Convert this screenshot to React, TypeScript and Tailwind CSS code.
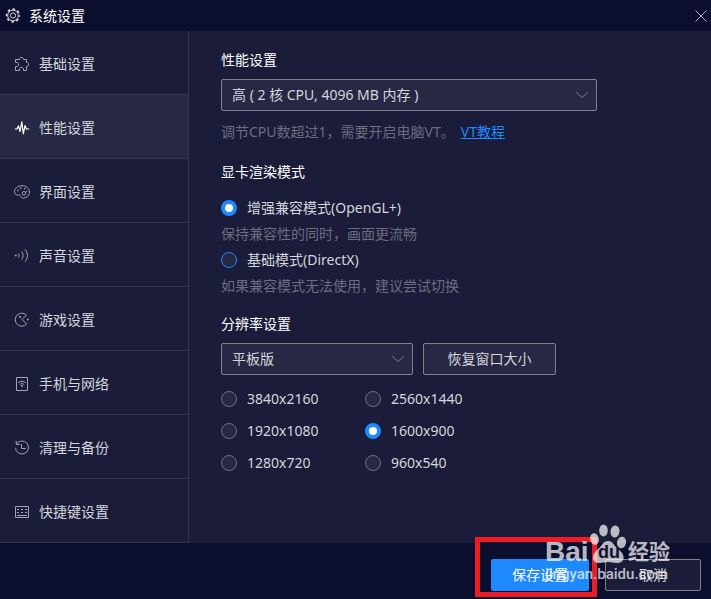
import { useState, type ReactNode } from "react";

type MenuItem = {
  label: string;
  icon: ReactNode;
};

type IconProps = {
  children: ReactNode;
};

function Icon({ children }: IconProps) {
  return (
    <svg
      viewBox="0 0 16 16"
      className="h-4 w-4 shrink-0"
      fill="none"
      stroke="currentColor"
      strokeWidth="1"
      aria-hidden="true"
    >
      {children}
    </svg>
  );
}

const menuItems: MenuItem[] = [
  {
    label: "基础设置",
    icon: (
      <Icon>
        <path d="M1.5 3.5H5.5V2.5L6.5 1.5H8.5L9.5 2.5V3.5H12.5V6.5H13.5L14.5 7.5V9.5L13.5 10.5H12.5V14.5H9.5V12.5L8.5 11.5H6.5L5.5 12.5V14.5H1.5V10.5H3.5L4.5 9.5V7.5L3.5 6.5H1.5Z" />
      </Icon>
    ),
  },
  {
    label: "性能设置",
    icon: (
      <Icon>
        <path
          d="M.8 9H3L4.5 5.8L6 11.5L7.8 1.8L9.3 13.8L11 5.5L12.3 9H15.2"
          stroke="#fff"
          strokeWidth="1.2"
          strokeLinejoin="round"
        />
      </Icon>
    ),
  },
  {
    label: "界面设置",
    icon: (
      <Icon>
        <path d="M8 1.7C3.8 1.7 .5 4.4 .5 7.8C.5 10 2.2 11.2 4.2 11C6 10.8 6.8 11.2 7 12.5C7.2 14 8.1 14.4 9.6 14.2C13 13.7 15.5 11.3 15.5 8C15.5 4.4 12.2 1.7 8 1.7Z" />
        <circle cx="10" cy="9.3" r="1.8" />
        <path d="M3.3 6.5H4.7M6 4.2H7.4M10 4.6H11.4M12.4 7.4H13.4" strokeWidth="1.4" />
      </Icon>
    ),
  },
  {
    label: "声音设置",
    icon: (
      <Icon>
        <circle cx="1.8" cy="7.5" r="1" fill="currentColor" stroke="none" />
        <path d="M4.4 5.5C5.3 6.7 5.3 8.3 4.4 9.5M7.7 3.5C9.6 5.9 9.6 9.1 7.7 11.5M11 1.3C14.2 5 14.2 10 11 13.7" />
      </Icon>
    ),
  },
  {
    label: "游戏设置",
    icon: (
      <Icon>
        <path d="M12.4 3.1A6.5 6.5 0 1 0 12.6 12L8.2 7.5Z" strokeLinejoin="round" />
        <path d="M5 5H7.2M6.1 3.9V6.1" />
        <circle cx="13.8" cy="7.5" r="1" fill="currentColor" stroke="none" />
      </Icon>
    ),
  },
  {
    label: "手机与网络",
    icon: (
      <Icon>
        <path d="M2.5 1.5H13.5V14.5H2.5Z" />
        <path d="M4.2 6.7C6.4 4.9 9.6 4.9 11.8 6.7M5.8 8.5C7.1 7.4 8.9 7.4 10.2 8.5" />
        <circle cx="8" cy="10" r="1" fill="currentColor" stroke="none" />
      </Icon>
    ),
  },
  {
    label: "清理与备份",
    icon: (
      <Icon>
        <path d="M2.4 4.2A6.5 6.5 0 1 1 1.5 7.8M2.2 .8V4.4H5.9M7.5 4V8.5H11.8" />
      </Icon>
    ),
  },
  {
    label: "快捷键设置",
    icon: (
      <Icon>
        <path d="M1.5 2.5H14.5V13.5H1.5Z" />
        <path d="M3 5.5H5M7 5.5H9M11 5.5H13M3 8.5H5M7 8.5H9M11 8.5H13M3 11.5H13" />
      </Icon>
    ),
  },
];

const resolutions = [
  "3840x2160",
  "2560x1440",
  "1920x1080",
  "1600x900",
  "1280x720",
  "960x540",
];

const radioClass =
  "h-4 w-4 shrink-0 appearance-none rounded-full border bg-[#262844] checked:border-4 checked:border-[#1e88ff] checked:bg-white";

type SelectBoxProps = {
  label: string;
  options: string[];
  className: string;
};

function SelectBox({ label, options, className }: SelectBoxProps) {
  return (
    <div className={`relative ${className}`}>
      <select
        aria-label={label}
        className="block h-8 w-full appearance-none rounded-xs border border-[#80818f] bg-[#262844] px-2.5 text-[#d5d5db]"
      >
        {options.map((option) => (
          <option key={option}>{option}</option>
        ))}
      </select>
      <svg
        viewBox="0 0 12 8"
        className="pointer-events-none absolute top-3 right-[9px] h-2 w-3"
        fill="none"
        stroke="#85868f"
        aria-hidden="true"
      >
        <path d="M.3 1L6 6.7L11.7 1" />
      </svg>
    </div>
  );
}

function Watermark() {
  return (
    <div className="pointer-events-none absolute right-9 bottom-[15px] w-[130px] font-['Roboto','Noto_Sans_CJK_SC',sans-serif] text-white opacity-70">
      <div className="flex h-10 items-end gap-0.5">
        <span className="w-[43px] font-['Liberation_Sans',sans-serif] text-[28px] leading-6 font-bold">
          Bai
        </span>
        <div className="relative h-10 w-9 shrink-0">
          <svg viewBox="0 0 36 40" className="h-10 w-9" fill="currentColor" aria-hidden="true">
            <ellipse cx="4.5" cy="15" rx="4.3" ry="5.8" transform="rotate(-12 4.5 15)" />
            <ellipse cx="13.5" cy="6.5" rx="4.3" ry="6" />
            <ellipse cx="25" cy="7.5" rx="4.5" ry="6" transform="rotate(8 25 7.5)" />
            <ellipse cx="31.5" cy="18.5" rx="4.5" ry="5.8" transform="rotate(12 31.5 18.5)" />
            <path d="M18 17C13 17 12 22 7 26C2 30 1 39 9 39C13 39 15 38 18 38C21 38 23 39 27 39C36 39 35 30 29 26C24 22 23 17 18 17Z" />
          </svg>
          <span className="absolute bottom-0.5 left-2 font-['Liberation_Sans',sans-serif] text-lg leading-5 font-bold text-[#11142f]">
            du
          </span>
        </div>
        <span className="text-[21px] leading-6 font-bold">经验</span>
      </div>
      <div className="text-[15px] leading-5 font-medium">jingyan.baidu.com</div>
    </div>
  );
}

export default function App() {
  const [active, setActive] = useState("性能设置");

  return (
    <div className="flex min-h-screen flex-col bg-[#1a1c39] font-['Noto_Sans','Noto_Sans_CJK_SC',sans-serif] text-sm leading-5 text-[#d5d5db]">
      {/* Title bar */}
      <header className="flex h-[31px] items-center justify-between bg-[#0c0e2d] pr-1 pl-[5px]">
        <h1 className="flex items-center gap-2 text-white">
          <svg
            viewBox="0 0 16 16"
            className="h-4 w-4"
            fill="none"
            stroke="#d5d5db"
            aria-hidden="true"
          >
            <circle cx="8" cy="7.5" r="5.3" />
            <circle
              cx="8"
              cy="7.5"
              r="6.4"
              strokeWidth="1.6"
              strokeDasharray="2.6 2.427"
              strokeDashoffset="1.3"
            />
            <circle cx="8" cy="7.5" r="2.6" />
          </svg>
          系统设置
        </h1>
        <button aria-label="关闭" className="text-[#b0b1bd]">
          <svg viewBox="0 0 12 12" className="h-3 w-3" fill="none" stroke="currentColor">
            <path d="M.5 .5L11.5 11.5M11.5 .5L.5 11.5" />
          </svg>
        </button>
      </header>

      <div className="flex flex-1">
        {/* Sidebar */}
        <nav className="w-[189px] shrink-0 border-r border-[#34354f]">
          {menuItems.map((item) => (
            <button
              key={item.label}
              onClick={() => setActive(item.label)}
              className={`flex h-16 w-full items-center gap-[9px] border-b border-[#34354f] px-3.5 pt-0.5 ${
                active === item.label ? "bg-[#262844]" : ""
              }`}
            >
              <span className="text-[#a3a4b0]">{item.icon}</span>
              {item.label}
            </button>
          ))}
        </nav>

        <main className="flex-1 px-8 pt-[19px]">
          <section>
            <h2 className="mb-[9px] text-white">性能设置</h2>
            <SelectBox
              label="性能设置"
              options={["高 ( 2 核 CPU, 4096 MB 内存 )"]}
              className="max-w-[376px]"
            />
            <p className="mt-[11px] text-[#6b6c80]">
              调节CPU数超过1，需要开启电脑VT。
              <a href="#vt" className="ml-1.5 text-[#1e88ff] underline">
                VT教程
              </a>
            </p>
          </section>

          <section className="mt-5">
            <h2 className="mb-4 text-white">显卡渲染模式</h2>
            <label className="flex items-center gap-2.5">
              <input
                type="radio"
                name="render"
                defaultChecked
                className={`${radioClass} border-[#1e88ff]`}
              />
              增强兼容模式(OpenGL+)
            </label>
            <p className="my-1.5 text-[#6b6c80]">保持兼容性的同时，画面更流畅</p>
            <label className="flex items-center gap-2.5">
              <input type="radio" name="render" className={`${radioClass} border-[#1e88ff]`} />
              基础模式(DirectX)
            </label>
            <p className="mt-1.5 text-[#6b6c80]">如果兼容模式无法使用，建议尝试切换</p>
          </section>

          <section className="mt-[18px]">
            <h2 className="mb-[9px] text-white">分辨率设置</h2>
            <div className="flex gap-2.5">
              <SelectBox label="分辨率设置" options={["平板版"]} className="w-48" />
              <button className="h-8 w-[133px] rounded-xs border border-[#80818f] bg-[#262844]">
                恢复窗口大小
              </button>
            </div>
            <div className="mt-3.5 grid grid-cols-[144px_144px] gap-y-3">
              {resolutions.map((resolution) => (
                <label key={resolution} className="flex items-center gap-2.5">
                  <input
                    type="radio"
                    name="resolution"
                    defaultChecked={resolution === "1600x900"}
                    className={`${radioClass} border-[#71727f]`}
                  />
                  {resolution}
                </label>
              ))}
            </div>
          </section>
        </main>
      </div>

      {/* Footer actions */}
      <footer className="relative flex justify-end gap-4 bg-[#0c0e2d] pt-4 pr-2.5 pb-2">
        <div className="relative">
          <button className="h-8 w-[98px] rounded-xs bg-[#1e88ff] text-white">保存设置</button>
          <div className="pointer-events-none absolute -top-[22px] -right-2 -bottom-1.5 -left-4 border-5 border-[#ee1c25]" />
        </div>
        <button className="h-8 w-24 rounded-xs border border-[#80818f] bg-[#1a1c39]">取消</button>
        <Watermark />
      </footer>
    </div>
  );
}
